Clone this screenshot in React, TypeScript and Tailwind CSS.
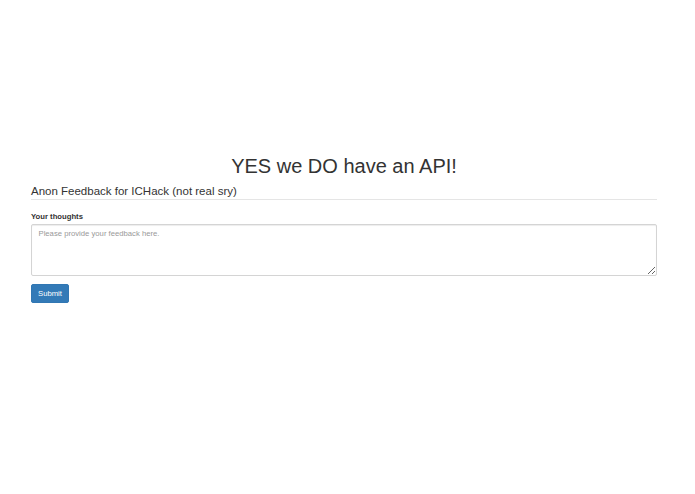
import React, { useState } from 'react';

const App: React.FC = () => {
  const [thoughts, setThoughts] = useState('');

  return (
    <div className="min-h-screen bg-white text-[#333] font-['Liberation_Sans',Arial,sans-serif]">
      <div className="pl-[31px] pr-[38px] pt-[155px]">
        <h1 className="text-center text-[20px] leading-[22px] font-normal">YES we DO have an API!</h1>
        <form
          className="mt-[6px] flex flex-col"
          onSubmit={(e) => {
            e.preventDefault();
          }}
        >
          <legend className="w-full text-[11.5px] leading-[16px] border-b border-[#e5e5e5]">
            Anon Feedback for ICHack (not real sry)
          </legend>
          <label className="mt-[11px] text-[7.7px] leading-[11px] font-bold">Your thoughts</label>
          <textarea
            className="mt-[2px] block h-[52px] w-full rounded-[2px] border border-[#d4d4d4] px-[6.5px] py-[3.3px] text-[7.7px] leading-[11px] text-[#555] placeholder:text-[#999] shadow-[inset_0_1px_1px_rgba(0,0,0,0.075)] outline-none"
            placeholder="Please provide your feedback here."
            value={thoughts}
            onChange={(e) => setThoughts(e.target.value)}
          />
          <div className="mt-[8px] flex">
            <button
              type="submit"
              className="flex h-[19px] w-[38px] items-center justify-center rounded-[2px] border border-[#3177b3] bg-[#337ab7] text-[7.7px] leading-[11px] text-white"
            >
              Submit
            </button>
          </div>
        </form>
      </div>
    </div>
  );
};

export default App;
